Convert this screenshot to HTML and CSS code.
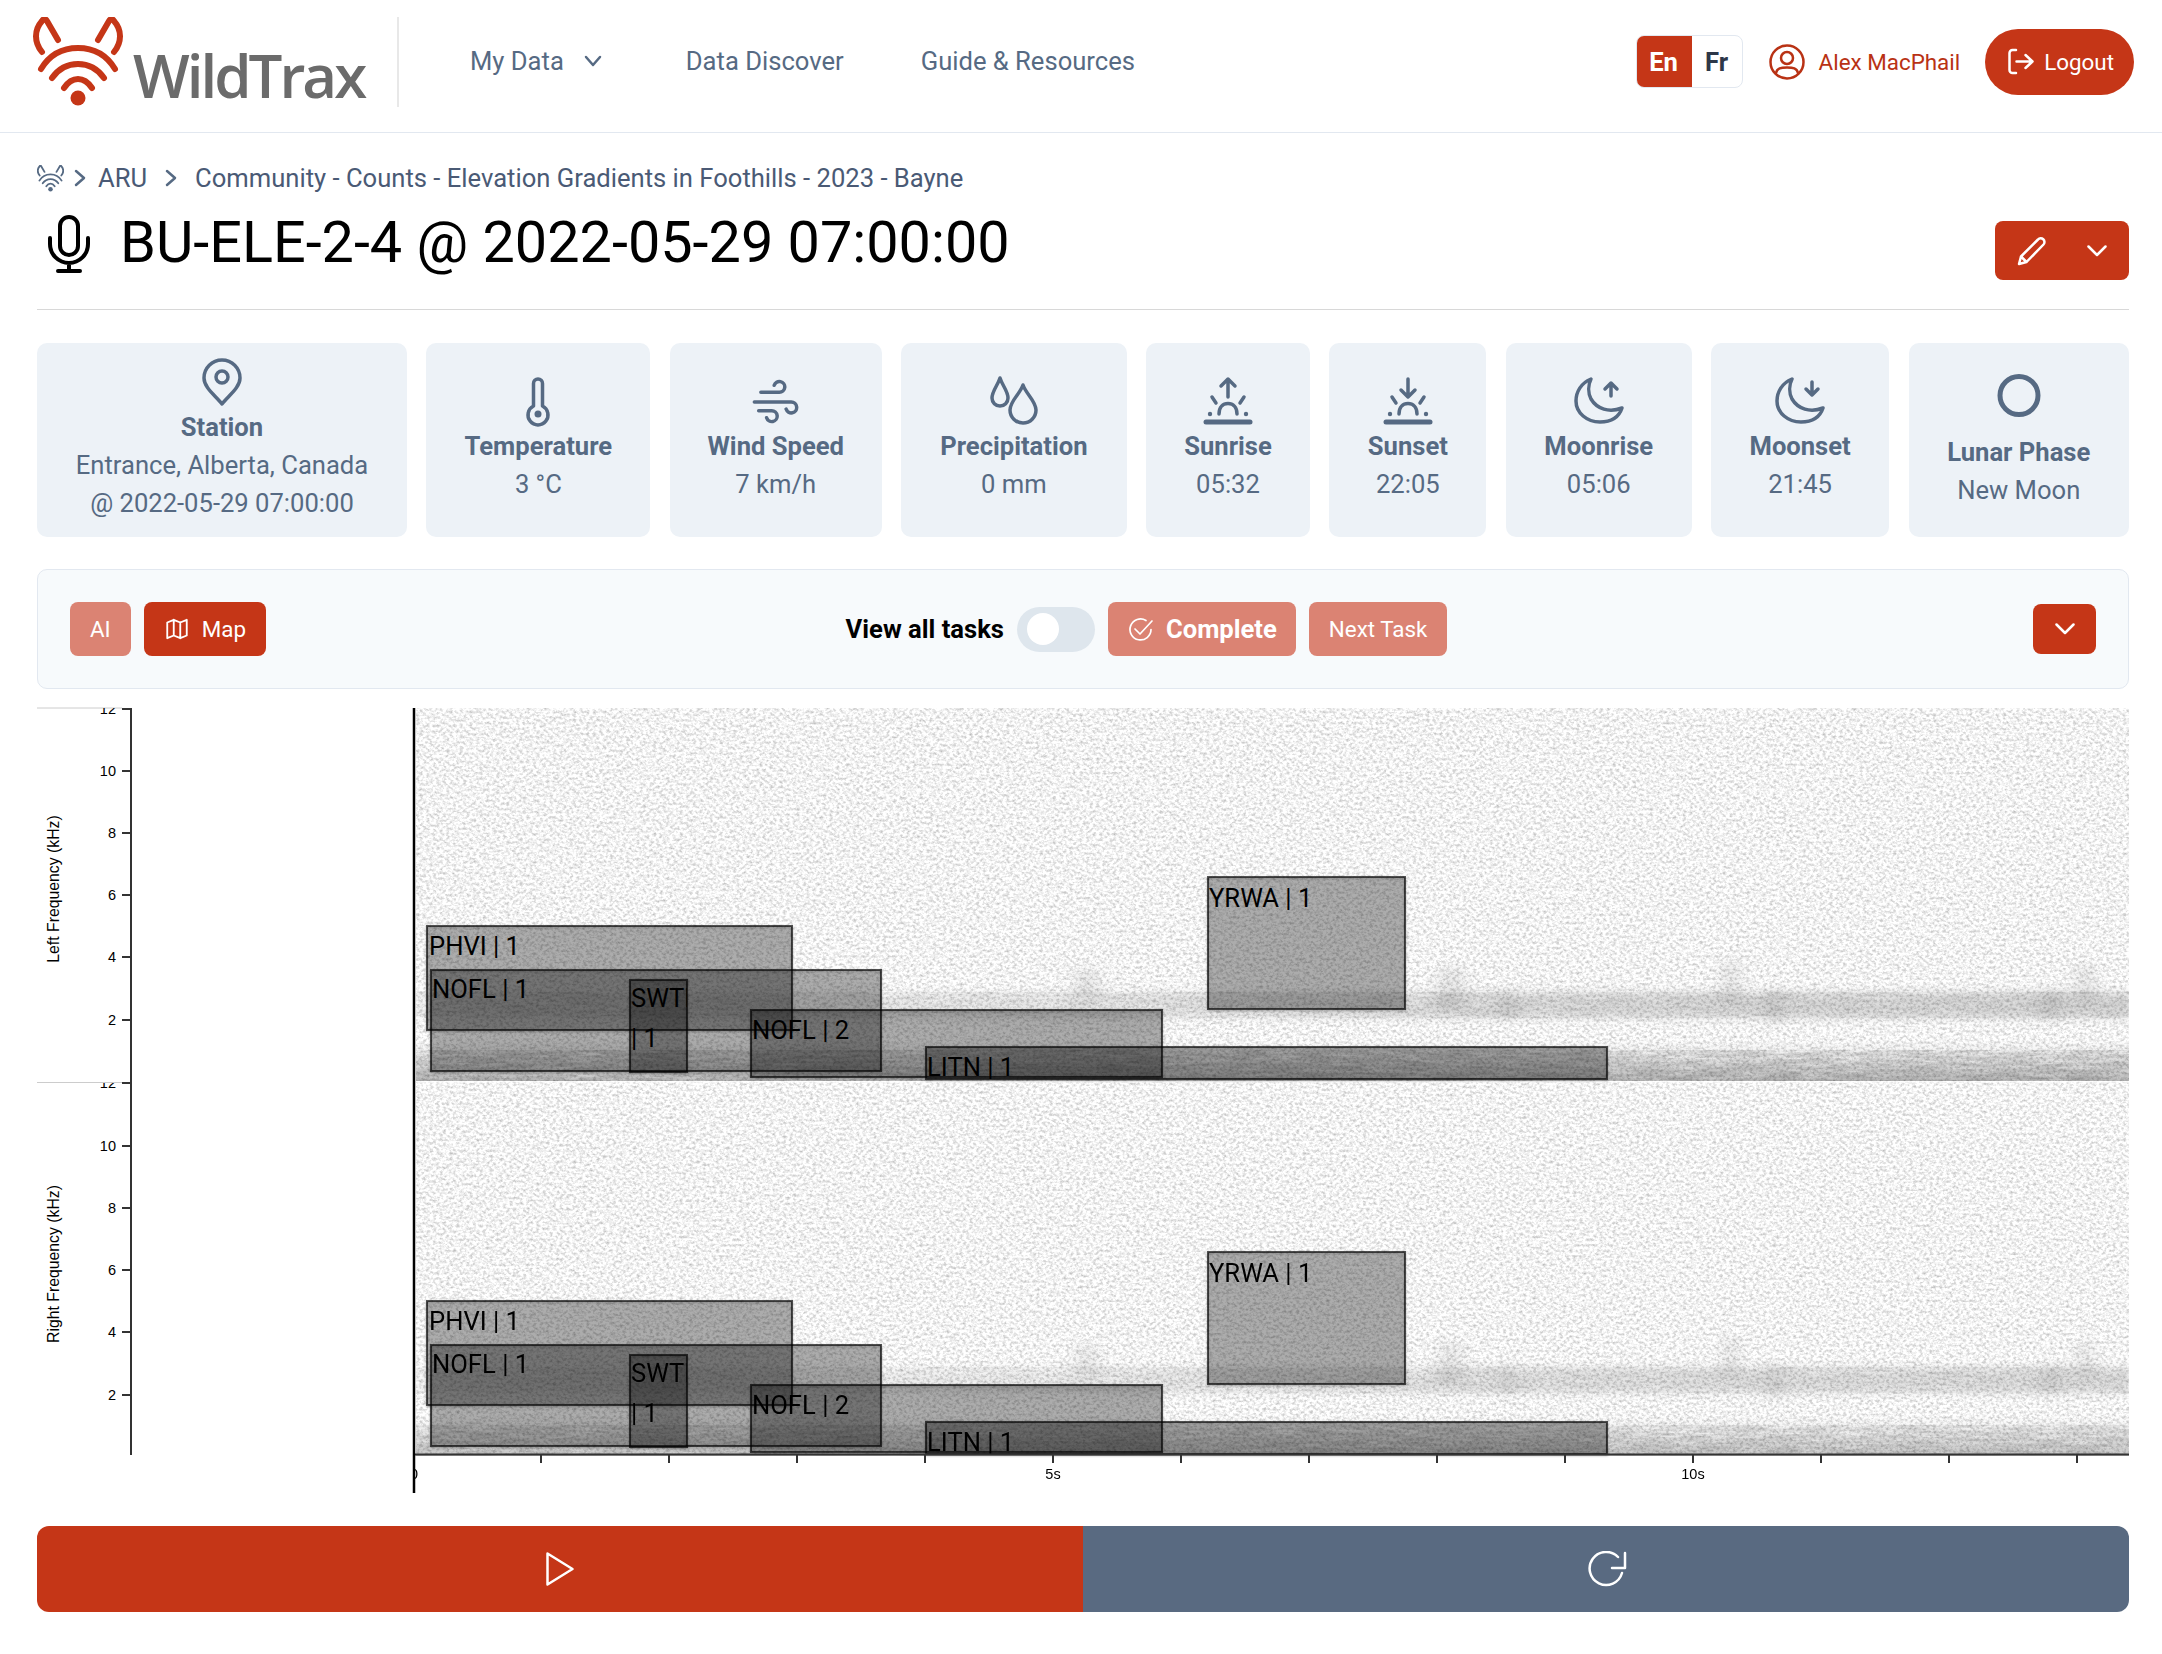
FILE: index.html
```html
<!DOCTYPE html>
<html lang="en">
<head>
    <meta charset="UTF-8">
    <meta name="viewport" content="width=device-width, initial-scale=1.0">
    <title>WildTrax - BU-ELE-2-4</title>
    <link rel="stylesheet" href="styles.css">
</head>
<body>
    <svg class="defs" width="0" height="0">
        <symbol id="fox" viewBox="33 17 90 90">
            <g fill="none" stroke="currentColor" stroke-width="6" stroke-linecap="round" stroke-linejoin="round">
                <path d="M58 40 L47 21 Q44.500 17 42 21 C34 30 34 42 42 52"/>
                <path d="M98 40 L109 21 Q111.500 17 114 21 C122 30 122 42 114 52"/>
                <path d="M41 69 C50 54 64 48 78 48 C92 48 106 54 115 69"/>
                <path d="M52 78 C59 68 68 64 78 64 C88 64 97 68 104 78"/>
                <path d="M64 88 C68 82 73 79 78 79 C83 79 88 82 92 88"/>
            </g>
            <circle cx="78" cy="98" r="7.500" fill="currentColor"/>
        </symbol>
    </svg>

    <header class="topbar">
        <a class="logo">
            <svg class="logo-mark" width="90" height="90"><use href="#fox"/></svg>
            <span class="logo-text">WildTrax</span>
        </a>
        <nav class="nav">
            <a class="nav-link nav-drop">My Data
                <svg width="18" height="12" viewBox="0 0 18 12"><path d="M2 2 L9 10 L16 2" class="line"/></svg>
            </a>
            <a class="nav-link">Data Discover</a>
            <a class="nav-link">Guide &amp; Resources</a>
        </nav>
        <div class="user-area">
            <div class="lang">
                <span class="lang-btn lang-on">En</span>
                <span class="lang-btn">Fr</span>
            </div>
            <a class="user">
                <svg width="36" height="36" viewBox="0 0 36 36" class="line-2">
                    <circle cx="18" cy="18" r="16.500"/>
                    <circle cx="18" cy="14" r="6"/>
                    <path d="M7 29 C8 24 12 23.500 18 23.500 C24 23.500 28 24 29 29"/>
                </svg>
                Alex MacPhail
            </a>
            <a class="logout">
                <svg width="27" height="27" viewBox="0 0 27 27" class="line-2">
                    <path d="M9 2 H5.500 a3 3 0 0 0 -3 3 V22 a3 3 0 0 0 3 3 H9"/>
                    <path d="M9.500 13.500 H25.500 M18.500 7 L25.500 13.500 L18.500 20"/>
                </svg>
                Logout
            </a>
        </div>
    </header>

    <main class="page">
        <div class="crumbs">
            <svg class="crumb-fox" width="27" height="27"><use href="#fox"/></svg>
            <svg class="crumb-sep" width="12" height="18" viewBox="0 0 12 18"><path d="M2 2 L10 9 L2 16" class="line"/></svg>
            <a>ARU</a>
            <svg class="crumb-sep crumb-sep-wide" width="12" height="18" viewBox="0 0 12 18"><path d="M2 2 L10 9 L2 16" class="line"/></svg>
            <a>Community - Counts - Elevation Gradients in Foothills - 2023 - Bayne</a>
        </div>

        <div class="title-row">
            <h1 class="title">
                <svg width="44" height="60" viewBox="0 0 44 60" class="mic">
                    <rect x="13" y="3" width="18" height="38" rx="9"/>
                    <path d="M3 24 V30 A19 19 0 0 0 41 30 V24 M22 49 V57 M11 57 H33"/>
                </svg>
                BU-ELE-2-4 @ 2022-05-29 07:00:00
            </h1>
            <button class="edit-btn">
                <svg width="30" height="30" viewBox="0 0 30 30" class="line-2">
                    <path d="M2 28 L4 20.500 L21 3.500 a3.500 3.500 0 0 1 5.500 5 L9.500 26 Z M4 20.500 L9.500 26"/>
                </svg>
                <svg width="20" height="12" viewBox="0 0 20 12" class="line-2"><path d="M1.500 1.500 L10 10 L18.500 1.500"/></svg>
            </button>
        </div>

        <section class="cards">
            <div class="card">
                <svg class="card-icon" viewBox="0 0 52 52">
                    <path d="M26 48 C20 40 8 32 8 22 A18 18 0 0 1 44 22 C44 32 32 40 26 48 Z"/>
                    <circle cx="26" cy="21" r="6"/>
                </svg>
                <b>Station</b>
                <span>Entrance, Alberta, Canada</span>
                <span>@ 2022-05-29 07:00:00</span>
            </div>
            <div class="card">
                <svg class="card-icon" viewBox="0 0 52 52">
                    <path d="M21.500 31 V8.500 a4.500 4.500 0 0 1 9 0 V31 a10 10 0 1 1 -9 0 Z"/>
                    <circle cx="26" cy="39" r="3.500" class="solid"/>
                </svg>
                <b>Temperature</b>
                <span>3 °C</span>
            </div>
            <div class="card">
                <svg class="card-icon" viewBox="0 0 24 24">
                    <path d="M5 8 h8.500 a2.500 2.500 0 1 0 -2.340 -3.240"/>
                    <path d="M2 12.500 h17 a2.500 2.500 0 1 1 -2.340 3.240"/>
                    <path d="M4 16.500 h6 a2.500 2.500 0 1 1 -2.340 3.240"/>
                </svg>
                <b>Wind Speed</b>
                <span>7 km/h</span>
            </div>
            <div class="card">
                <svg class="card-icon" viewBox="0 0 52 52">
                    <path d="M12 3 C10 10 4 16 4 23 a8 8 0 0 0 16 0 C20 16 14 10 12 3 Z"/>
                    <path d="M35 10 C32 19 22 26 22 35 a13 13 0 0 0 26 0 C48 26 38 19 35 10 Z"/>
                </svg>
                <b>Precipitation</b>
                <span>0 mm</span>
            </div>
            <div class="card">
                <svg class="card-icon" viewBox="0 0 52 52">
                    <path d="M26 22 V4 M19 11 L26 4 L33 11"/>
                    <path d="M10 22 L14 28 M42 22 L38 28"/>
                    <path d="M17 39 C17 32 21 28.500 26 28.500 C31 28.500 35 32 35 39"/>
                    <circle cx="8" cy="39" r="2.200" class="solid"/>
                    <circle cx="44" cy="39" r="2.200" class="solid"/>
                    <path d="M4 47 H48" class="thick"/>
                </svg>
                <b>Sunrise</b>
                <span>05:32</span>
            </div>
            <div class="card">
                <svg class="card-icon" viewBox="0 0 52 52">
                    <path d="M26 4 V22 M19 15 L26 22 L33 15"/>
                    <path d="M10 22 L14 28 M42 22 L38 28"/>
                    <path d="M17 39 C17 32 21 28.500 26 28.500 C31 28.500 35 32 35 39"/>
                    <circle cx="8" cy="39" r="2.200" class="solid"/>
                    <circle cx="44" cy="39" r="2.200" class="solid"/>
                    <path d="M4 47 H48" class="thick"/>
                </svg>
                <b>Sunset</b>
                <span>22:05</span>
            </div>
            <div class="card">
                <svg class="card-icon" viewBox="0 0 52 52">
                    <path d="M18 4 C8 8 3 17 3 26 C3 38 14 47 27 47 C38 47 46 42 49 33 C36 38 24 34 18 24 C15 18 15 10 18 4 Z"/>
                    <path d="M38 21 V8 M32 14 L38 8 L44 14"/>
                </svg>
                <b>Moonrise</b>
                <span>05:06</span>
            </div>
            <div class="card">
                <svg class="card-icon" viewBox="0 0 52 52">
                    <path d="M18 4 C8 8 3 17 3 26 C3 38 14 47 27 47 C38 47 46 42 49 33 C36 38 24 34 18 24 C15 18 15 10 18 4 Z"/>
                    <path d="M38 7 V20 M32 14 L38 20 L44 14"/>
                </svg>
                <b>Moonset</b>
                <span>21:45</span>
            </div>
            <div class="card">
                <svg class="card-icon card-icon-tall" viewBox="0 0 52 63">
                    <circle cx="26" cy="25.500" r="19" class="ring"/>
                </svg>
                <b>Lunar Phase</b>
                <span>New Moon</span>
            </div>
        </section>

        <section class="toolbar">
            <div class="tool-group">
                <button class="btn btn-dim">AI</button>
                <button class="btn">
                    <svg width="26" height="26" viewBox="0 0 24 24" class="line-2 thin">
                        <path d="M3 6 L9 3.500 L15 6 L21 3.500 V18 L15 20.500 L9 18 L3 20.500 Z M9 3.500 V18 M15 6 V20.500"/>
                    </svg>
                    Map
                </button>
            </div>
            <div class="tool-group tool-center">
                <span class="view-all">View all tasks</span>
                <span class="toggle"><i></i></span>
                <button class="btn btn-dim btn-bold">
                    <svg width="27" height="27" viewBox="0 0 27 27" class="line-2 thin">
                        <path d="M24 13.500 a10.500 10.500 0 1 1 -5 -9"/>
                        <path d="M8 13 L13 18 L25 5"/>
                    </svg>
                    Complete
                </button>
                <button class="btn btn-dim">Next Task</button>
            </div>
            <button class="btn btn-more">
                <svg width="20" height="12" viewBox="0 0 20 12" class="line-2"><path d="M1.500 1.500 L10 10 L18.500 1.500"/></svg>
            </button>
        </section>

        <svg class="chart" viewBox="37 700 2092 810" width="2092" height="810">
            <defs>
                <filter id="grain" x="0" y="0" width="100%" height="100%" color-interpolation-filters="sRGB">
                    <feTurbulence type="fractalNoise" baseFrequency="0.3 0.36" numOctaves="3" seed="7"/>
                    <feColorMatrix type="matrix" values="0.5 0 0 0 0.7  0.5 0 0 0 0.7  0.5 0 0 0 0.7  0 0 0 0 1"/>
                    <feGaussianBlur stdDeviation="0.600"/>
                </filter>
                <filter id="streak" x="0" y="0" width="100%" height="100%" color-interpolation-filters="sRGB">
                    <feTurbulence type="fractalNoise" baseFrequency="0.03 0.3" numOctaves="3" seed="3"/>
                    <feColorMatrix type="matrix" values="0 0 0 0 0  0 0 0 0 0  0 0 0 0 0  2.4 0 0 0 -0.55"/>
                    <feComposite in="SourceGraphic" operator="in"/>
                    <feGaussianBlur stdDeviation="1.500 0.600"/>
                </filter>
                <filter id="soft"><feGaussianBlur stdDeviation="7 4"/></filter>
                <filter id="fuzz" x="0" y="-50%" width="100%" height="200%"><feGaussianBlur stdDeviation="2 4"/></filter>
                <linearGradient id="midband" x1="0" x2="1" y1="0" y2="0">
                    <stop offset="0" stop-color="#000" stop-opacity="0.02"/>
                    <stop offset="0.3" stop-color="#000" stop-opacity="0.05"/>
                    <stop offset="0.63" stop-color="#000" stop-opacity="0.11"/>
                    <stop offset="1" stop-color="#000" stop-opacity="0.13"/>
                </linearGradient>
                <linearGradient id="lowband" x1="0" x2="0" y1="0" y2="1">
                    <stop offset="0" stop-color="#000" stop-opacity="0"/>
                    <stop offset="0.45" stop-color="#000" stop-opacity="0.08"/>
                    <stop offset="1" stop-color="#000" stop-opacity="0.24"/>
                </linearGradient>
                <clipPath id="ch-left"><rect x="37" y="708" width="100" height="373"/></clipPath>
                <clipPath id="ch-right"><rect x="37" y="1083" width="100" height="373"/></clipPath>
                <clipPath id="x-labels"><rect x="415" y="1456" width="1714" height="40"/></clipPath>
                <clipPath id="swti"><rect x="630" y="980" width="57" height="92"/></clipPath>
                <g id="bands">
                    <rect x="416" y="992" width="1713" height="26" fill="url(#midband)" filter="url(#fuzz)"/>
                    <rect x="416" y="992" width="1713" height="26" fill="#000" fill-opacity="0.05" filter="url(#streak)"/>
                    <rect x="416" y="1040" width="1713" height="41" fill="url(#lowband)"/>
                    <rect x="416" y="1050" width="1713" height="31" fill="#000" fill-opacity="0.12" filter="url(#streak)"/>
                    <g filter="url(#soft)" fill="#000" fill-opacity="0.08">
                        <rect x="1075" y="970" width="24" height="30"/>
                        <rect x="1438" y="968" width="26" height="44"/>
                        <rect x="1722" y="962" width="18" height="40"/>
                        <rect x="2076" y="966" width="18" height="34"/>
                        <rect x="1500" y="990" width="14" height="30"/>
                        <rect x="1766" y="990" width="18" height="34"/>
                        <rect x="2040" y="990" width="20" height="30"/>
                    </g>
                </g>
            </defs>

            <!-- spectrogram -->
            <rect x="416" y="708" width="1713" height="746" fill="#eee" filter="url(#grain)"/>
            <use href="#bands"/>
            <use href="#bands" y="375" opacity="0.85"/>
            <rect x="416" y="1081" width="1713" height="1.500" fill="#fff" fill-opacity="0.7"/>

            <!-- left channel boxes -->
            <g class="tag-box">
                <rect x="427" y="926" width="365" height="104"/>
                <text x="429" y="955">PHVI | 1</text>
                <rect x="431" y="970" width="450" height="101"/>
                <text x="432" y="998">NOFL | 1</text>
                <rect x="630" y="980" width="57" height="92"/>
                <text x="631" y="1007" clip-path="url(#swti)">SWTI</text>
                <text x="631" y="1047">| 1</text>
                <rect x="751" y="1010" width="411" height="67"/>
                <text x="752" y="1039">NOFL | 2</text>
                <rect x="926" y="1047" width="681" height="32"/>
                <text x="927" y="1076">LITN | 1</text>
                <rect x="1208" y="877" width="197" height="132"/>
                <text x="1209" y="907">YRWA | 1</text>
            </g>

            <!-- right channel boxes -->
            <g class="tag-box" transform="translate(0 375)">
                <rect x="427" y="926" width="365" height="104"/>
                <text x="429" y="955">PHVI | 1</text>
                <rect x="431" y="970" width="450" height="101"/>
                <text x="432" y="998">NOFL | 1</text>
                <rect x="630" y="980" width="57" height="92"/>
                <text x="631" y="1007" clip-path="url(#swti)">SWTI</text>
                <text x="631" y="1047">| 1</text>
                <rect x="751" y="1010" width="411" height="67"/>
                <text x="752" y="1039">NOFL | 2</text>
                <rect x="926" y="1047" width="681" height="32"/>
                <text x="927" y="1076">LITN | 1</text>
                <rect x="1208" y="877" width="197" height="132"/>
                <text x="1209" y="907">YRWA | 1</text>
            </g>

            <!-- frequency axis -->
            <path class="rule" d="M37 708 H122 M37 1082.500 H122"/>
            <path class="axis" d="M131 708 V1455 M122 709 H131 M122 771 H131 M122 833 H131 M122 895 H131 M122 957 H131 M122 1020 H131 M122 1083 H131 M122 1146 H131 M122 1208 H131 M122 1270 H131 M122 1332 H131 M122 1395 H131"/>
            <g class="axis-text" text-anchor="end">
                <text x="116" y="714" clip-path="url(#ch-left)">12</text>
                <text x="116" y="776">10</text>
                <text x="116" y="838">8</text>
                <text x="116" y="900">6</text>
                <text x="116" y="962">4</text>
                <text x="116" y="1025">2</text>
                <text x="116" y="1088" clip-path="url(#ch-right)">12</text>
                <text x="116" y="1151">10</text>
                <text x="116" y="1213">8</text>
                <text x="116" y="1275">6</text>
                <text x="116" y="1337">4</text>
                <text x="116" y="1400">2</text>
            </g>
            <text class="axis-text axis-name" transform="rotate(-90 59 889)" x="59" y="889" text-anchor="middle">Left Frequency (kHz)</text>
            <text class="axis-text axis-name" transform="rotate(-90 59 1264)" x="59" y="1264" text-anchor="middle">Right Frequency (kHz)</text>

            <!-- time axis -->
            <path class="axis" d="M414 1454.500 H2129 M541 1454 V1463 M669 1454 V1463 M797 1454 V1463 M925 1454 V1463 M1053 1454 V1463 M1181 1454 V1463 M1309 1454 V1463 M1437 1454 V1463 M1565 1454 V1463 M1693 1454 V1463 M1821 1454 V1463 M1949 1454 V1463 M2077 1454 V1463"/>
            <g class="axis-text" text-anchor="middle">
                <text x="414" y="1479" clip-path="url(#x-labels)">0</text>
                <text x="1053" y="1479">5s</text>
                <text x="1693" y="1479">10s</text>
            </g>
            <path class="playhead" d="M414 708 V1493"/>
        </svg>

        <div class="player">
            <button class="player-btn player-play">
                <svg width="30" height="36" viewBox="0 0 30 36" class="line-2"><path d="M2.500 2.500 L27.500 18 L2.500 33.500 Z"/></svg>
            </button>
            <button class="player-btn player-reset">
                <svg width="40" height="36" viewBox="0 0 40 36" class="line-2 reset-icon">
                    <path d="M34 22 A16.500 16.500 0 1 1 30 6"/>
                    <path d="M37 2 V17 H24"/>
                </svg>
            </button>
        </div>
    </main>
</body>
</html>
```

FILE: styles.css
```css
* {
    box-sizing: border-box;
}
body {
    margin: 0;
    font-family: Roboto, "Liberation Sans", sans-serif;
    font-size: 25.6px;
    color: #4a5a75;
    background-color: #fff;
}
.defs {
    position: absolute;
}
button {
    font-family: inherit;
    border: none;
}

/* shared svg strokes */
.line {
    fill: none;
    stroke: currentColor;
    stroke-width: 2.5;
    stroke-linecap: round;
    stroke-linejoin: round;
}
.line-2 {
    fill: none;
    stroke: currentColor;
    stroke-width: 2.5;
    stroke-linecap: round;
    stroke-linejoin: round;
    flex: none;
}
.line-2.thin {
    stroke-width: 1.7;
}

/* top bar */
.topbar {
    display: flex;
    align-items: center;
    height: 133px;
    padding: 0 28px 9px 33px;
    border-bottom: 1px solid #e2e8f0;
}
.logo {
    display: flex;
    align-items: flex-start;
    width: 366px;
    height: 90px;
    border-right: 2px solid #e8e8e8;
}
.logo-mark {
    color: #c53617;
    flex: none;
}
.logo-text {
    margin: 22px 0 0 10px;
    font-family: "Open Sans", sans-serif;
    font-size: 60px;
    font-weight: 600;
    line-height: 72px;
    letter-spacing: -3px;
    color: #6b6b6b;
}
.nav {
    display: flex;
    align-items: center;
    margin: -2px 0 0 71px;
    gap: 77px;
}
.nav-link {
    display: flex;
    align-items: center;
    color: #566a83;
    line-height: 32px;
}
.nav-drop {
    gap: 20px;
    margin-right: 7px;
}
.user-area {
    display: flex;
    align-items: center;
    margin-left: auto;
}
.lang {
    display: flex;
    height: 53px;
    border: 1px solid #e2e8f0;
    border-radius: 8px;
    overflow: hidden;
}
.lang-btn {
    display: flex;
    align-items: center;
    justify-content: center;
    width: 50px;
    font-weight: 700;
    color: #2d3748;
}
.lang-on {
    width: 56px;
    margin: -1px 0 -1px -1px;
    background-color: #c53617;
    color: #fff;
}
.user {
    display: flex;
    align-items: center;
    gap: 14px;
    margin-left: 26px;
    font-size: 22.4px;
    color: #b93214;
}
.logout {
    display: flex;
    align-items: center;
    gap: 10px;
    height: 66px;
    margin-left: 25px;
    padding: 0 20px 0 22px;
    border-radius: 33px;
    background-color: #c53617;
    color: #fff;
    font-size: 22.4px;
}

/* page */
.page {
    padding: 30px 33px 0 37px;
}
.crumbs {
    display: flex;
    align-items: center;
    height: 30px;
}
.crumb-sep {
    margin: 0 12px 0 10px;
    color: #566a83;
}
.crumb-sep-wide {
    margin: 0 18px;
}
.crumb-fox {
    color: #566a83;
}
.title-row {
    display: flex;
    justify-content: space-between;
    align-items: flex-start;
    height: 117px;
    padding-top: 28px;
    border-bottom: 1px solid #d8d8d8;
}
.title {
    display: flex;
    align-items: center;
    gap: 29px;
    margin: -14px 0 0 10px;
    font-size: 57.6px;
    font-weight: 400;
    line-height: 72px;
    color: #000;
}
.mic {
    fill: none;
    stroke: #000;
    stroke-width: 4;
    stroke-linecap: round;
    stroke-linejoin: round;
    margin-top: 2px;
}
.edit-btn {
    display: flex;
    align-items: center;
    gap: 40px;
    width: 134px;
    height: 59px;
    padding: 0 0 0 22px;
    border-radius: 8px;
    background-color: #c53617;
    color: #fff;
}

/* stat cards */
.cards {
    display: grid;
    grid-template-columns: 370fr 224fr 212fr 225.5fr 164fr 157fr 186fr 178fr 220.5fr;
    column-gap: 19.4px;
    margin-top: 33px;
}
.card {
    display: flex;
    flex-direction: column;
    align-items: center;
    justify-content: center;
    height: 194px;
    padding-bottom: 2px;
    border-radius: 10px;
    background-color: #edf2f7;
    color: #566a83;
    line-height: 38px;
    text-align: center;
}
.card b {
    font-weight: 700;
}
.card-icon {
    width: 52px;
    height: 52px;
    fill: none;
    stroke: #566a83;
    stroke-width: 3.500;
    stroke-linecap: round;
    stroke-linejoin: round;
}
.card-icon[viewBox="0 0 24 24"] {
    stroke-width: 1.600;
}
.card-icon-tall {
    height: 63px;
}
.card-icon .solid {
    fill: #566a83;
    stroke: none;
}
.card-icon .thick {
    stroke-width: 5;
}
.card-icon .ring {
    stroke-width: 5;
}

/* task toolbar */
.toolbar {
    display: flex;
    align-items: center;
    justify-content: space-between;
    height: 120px;
    margin-top: 32px;
    padding: 0 32px;
    border: 1px solid #e2e8f0;
    border-radius: 10px;
    background-color: #f7fafc;
}
.tool-group {
    display: flex;
    align-items: center;
    gap: 13px;
}
.tool-center {
    margin-right: 6px;
}
.view-all {
    font-weight: 700;
    color: #000;
}
.toggle {
    display: flex;
    align-items: center;
    width: 78px;
    height: 45px;
    padding-left: 10px;
    border-radius: 23px;
    background-color: #dee6ed;
}
.toggle i {
    width: 32px;
    height: 32px;
    border-radius: 50%;
    background-color: #fff;
}
.btn {
    display: flex;
    align-items: center;
    gap: 12px;
    height: 54px;
    padding: 0 20px;
    border-radius: 8px;
    background-color: #c53617;
    color: #fff;
    font-size: 22.4px;
}
.btn-dim {
    background-color: #db8373;
}
.btn-bold {
    padding: 0 19px;
    font-size: 25.6px;
    font-weight: 700;
}
.btn-more {
    width: 63px;
    height: 50px;
    padding: 0;
    justify-content: center;
}

/* chart */
.chart {
    display: block;
    margin-top: 11px;
}
.tag-box rect {
    fill: #000;
    fill-opacity: 0.25;
    stroke: #000;
    stroke-opacity: 0.65;
    stroke-width: 2;
    filter: drop-shadow(0 1px 1px rgba(0, 0, 0, 0.4));
}
.tag-box text {
    font-family: Roboto, sans-serif;
    font-size: 25.6px;
    fill: #000;
}
.rule {
    fill: none;
    stroke: #ccc;
    stroke-width: 1;
}
.axis {
    fill: none;
    stroke: #333;
    stroke-width: 2;
}
.axis-text {
    font-family: "Liberation Sans", sans-serif;
    font-size: 14.500px;
    fill: #000;
}
.axis-name {
    font-size: 15.800px;
}
.playhead {
    fill: none;
    stroke: #000;
    stroke-width: 2.500;
}

/* player */
.player {
    display: flex;
    height: 86px;
    margin-top: 16px;
    border-radius: 12px;
    overflow: hidden;
}
.player-btn {
    display: flex;
    align-items: center;
    justify-content: center;
    flex: 1;
    color: #fff;
}
.player-play {
    background-color: #c53617;
}
.player-reset {
    background-color: #596a81;
}
.reset-icon {
    margin-left: 4px;
}
```
